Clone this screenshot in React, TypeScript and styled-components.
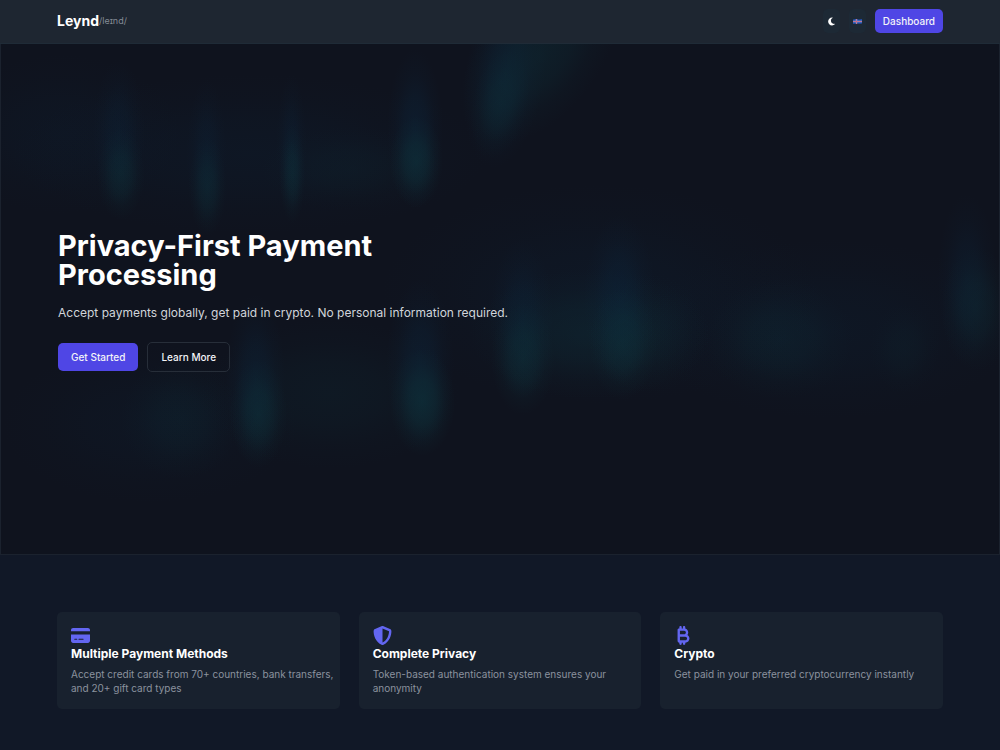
import React from "react";
import styled, { createGlobalStyle } from "styled-components";
import { FaMoon, FaCreditCard, FaShieldHalved, FaBitcoinSign } from "react-icons/fa6";

const GlobalStyle = createGlobalStyle`
  *, *::before, *::after { box-sizing: border-box; }
  body {
    margin: 0;
    background: #111827;
    color: #ffffff;
    font-family: Inter, "Liberation Sans", sans-serif;
  }
  h1, h2, p { margin: 0; }
`;

const Page = styled.div`
  min-height: 100vh;
  display: flex;
  flex-direction: column;
`;

const Header = styled.header`
  display: flex;
  align-items: center;
  justify-content: space-between;
  height: 44px;
  padding: 0 57px 1px;
  background: #1e2631;
  border-bottom: 1px solid #1f2b37;
`;

const Brand = styled.a`
  display: flex;
  align-items: center;
  color: #ffffff;
  font-size: 14px;
  line-height: 20px;
  font-weight: 700;
  text-decoration: none;
`;

const Pronunciation = styled.span`
  color: #848b95;
  font-size: 9px;
  font-weight: 400;
`;

const Actions = styled.nav`
  display: flex;
  align-items: center;
  gap: 9px;
`;

const IconButton = styled.button`
  display: flex;
  align-items: center;
  justify-content: center;
  width: 17px;
  height: 24px;
  padding: 0;
  border: 0;
  border-radius: 5px;
  background: #1d2935;
  color: #ffffff;
  font-size: 9px;
`;

const ButtonLink = styled.a<{ $size: "small" | "large"; $outline?: boolean }>`
  display: flex;
  align-items: center;
  height: ${(p) => (p.$size === "small" ? 24 : p.$outline ? 30 : 28)}px;
  padding: 0 ${(p) => (p.$size === "small" ? 8 : 13)}px;
  border: ${(p) => (p.$outline ? "1px solid #272e39" : "0")};
  border-radius: 5px;
  background: ${(p) => (p.$outline ? "transparent" : "#4f46e5")};
  color: #f3f4f8;
  font-size: 10px;
  line-height: 14px;
  font-weight: 500;
  text-decoration: none;
  white-space: nowrap;
`;

const Hero = styled.section`
  position: relative;
  display: flex;
  align-items: center;
  min-height: 511px;
  padding: 4px 57px 0;
  border: 1px solid #1b222e;
  border-top: 0;
  background: #0f131e;
  overflow: hidden;
`;

const Aurora = styled.svg`
  position: absolute;
  inset: 0;
  width: 100%;
  height: 100%;
`;

const HeroContent = styled.div`
  position: relative;
  display: flex;
  flex-direction: column;
  gap: 14px;
`;

const Title = styled.h1`
  max-width: 400px;
  font-size: 29px;
  line-height: 29px;
  font-weight: 700;
`;

const Lead = styled.p`
  color: #d1d5db;
  font-size: 12px;
  line-height: 20px;
`;

const ButtonRow = styled.div`
  display: flex;
  align-items: center;
  gap: 9px;
  padding-top: 5px;
`;

const Features = styled.section`
  display: grid;
  grid-template-columns: repeat(3, 1fr);
  gap: 19px;
  padding: 57px;
`;

const Card = styled.article`
  padding: 14px 4px 14px 14px;
  border-radius: 5px;
  background: #18212e;
`;

const CardIcon = styled.div`
  display: flex;
  color: #6366f1;
  font-size: 19px;
`;

const CardTitle = styled.h2`
  font-size: 12px;
  line-height: 17px;
  font-weight: 700;
`;

const CardText = styled.p`
  padding-top: 5px;
  color: #8b929e;
  font-size: 10px;
  line-height: 14px;
`;

const Flag = () => (
  <svg width="9" height="7" viewBox="0 0 9 7" aria-hidden="true">
    <path d="M0 1.6Q2.2 .6 4.5 1.2T9 1V5.4Q6.8 6.2 4.5 5.6T0 6Z" fill="#1f4fae" />
    <path d="M0 3.5H9M3.5 1V6" stroke="#8fa6dc" strokeWidth="1.4" />
    <path d="M0 3.5H9M3.5 1V6" stroke="#d8566c" strokeWidth="0.6" />
  </svg>
);

type Glow = [
  x: number,
  y: number,
  rx: number,
  ry: number,
  tone: "blue" | "teal",
  opacity: number,
  rotation?: number,
];

const glows: Glow[] = [
  [60, 90, 120, 80, "blue", 0.15],
  [250, 110, 240, 80, "blue", 0.18],
  [118, 90, 26, 75, "blue", 0.28],
  [120, 130, 24, 46, "teal", 0.45],
  [206, 110, 20, 75, "blue", 0.25],
  [207, 143, 19, 50, "teal", 0.4],
  [291, 100, 15, 70, "blue", 0.25],
  [292, 130, 13, 50, "teal", 0.45],
  [350, 125, 90, 42, "teal", 0.16],
  [415, 85, 28, 80, "blue", 0.42],
  [416, 118, 27, 46, "teal", 0.6],
  [505, 30, 40, 95, "blue", 0.4, 8],
  [500, 60, 28, 55, "teal", 0.35, 12],
  [540, 10, 60, 105, "teal", 0.38, 38],
  [600, 250, 220, 110, "blue", 0.2],
  [180, 375, 60, 60, "teal", 0.24],
  [150, 380, 150, 80, "blue", 0.14],
  [255, 335, 30, 85, "blue", 0.38],
  [258, 370, 29, 54, "teal", 0.52],
  [330, 350, 130, 75, "teal", 0.2],
  [420, 320, 34, 85, "blue", 0.42],
  [422, 358, 33, 54, "teal", 0.65],
  [522, 275, 32, 80, "blue", 0.35],
  [523, 315, 32, 56, "teal", 0.5],
  [590, 290, 120, 65, "teal", 0.35],
  [650, 290, 60, 60, "teal", 0.18],
  [620, 255, 36, 85, "blue", 0.4],
  [623, 300, 34, 56, "teal", 0.45],
  [780, 295, 75, 60, "teal", 0.28],
  [830, 285, 190, 90, "blue", 0.18],
  [905, 305, 35, 45, "teal", 0.15],
  [968, 235, 30, 85, "blue", 0.3],
  [978, 265, 36, 62, "teal", 0.32],
];

const AuroraBackdrop = () => (
  <Aurora viewBox="0 0 1000 510" preserveAspectRatio="none" aria-hidden="true">
    <defs>
      <radialGradient id="blue">
        <stop offset="0" stopColor="#0c2840" />
        <stop offset="0.4" stopColor="#0c2840" stopOpacity="0.7" />
        <stop offset="0.7" stopColor="#0c2840" stopOpacity="0.25" />
        <stop offset="1" stopColor="#0c2840" stopOpacity="0" />
      </radialGradient>
      <radialGradient id="teal">
        <stop offset="0" stopColor="#0e323b" />
        <stop offset="0.4" stopColor="#0e323b" stopOpacity="0.7" />
        <stop offset="0.7" stopColor="#0e323b" stopOpacity="0.25" />
        <stop offset="1" stopColor="#0e323b" stopOpacity="0" />
      </radialGradient>
    </defs>
    {glows.map(([cx, cy, rx, ry, tone, opacity, rotation = 0], i) => (
      <ellipse
        key={i}
        cx={cx}
        cy={cy}
        rx={rx}
        ry={ry}
        fill={`url(#${tone})`}
        opacity={opacity}
        transform={`rotate(${rotation} ${cx} ${cy})`}
      />
    ))}
  </Aurora>
);

const features = [
  {
    icon: <FaCreditCard />,
    title: "Multiple Payment Methods",
    text: "Accept credit cards from 70+ countries, bank transfers, and 20+ gift card types",
  },
  {
    icon: <FaShieldHalved />,
    title: "Complete Privacy",
    text: "Token-based authentication system ensures your anonymity",
  },
  {
    icon: <FaBitcoinSign />,
    title: "Crypto",
    text: "Get paid in your preferred cryptocurrency instantly",
  },
];

export default function App() {
  return (
    <Page>
      <GlobalStyle />
      <Header>
        <Brand href="#">
          Leynd<Pronunciation>/leɪnd/</Pronunciation>
        </Brand>
        <Actions>
          <IconButton type="button" aria-label="Toggle theme">
            <FaMoon />
          </IconButton>
          <IconButton type="button" aria-label="Change language">
            <Flag />
          </IconButton>
          <ButtonLink href="#dashboard" $size="small">Dashboard</ButtonLink>
        </Actions>
      </Header>
      <main>
        <Hero>
          <AuroraBackdrop />
          <HeroContent>
            <Title>Privacy-First Payment Processing</Title>
            <Lead>Accept payments globally, get paid in crypto. No personal information required.</Lead>
            <ButtonRow>
              <ButtonLink href="#start" $size="large">Get Started</ButtonLink>
              <ButtonLink href="#features" $size="large" $outline>Learn More</ButtonLink>
            </ButtonRow>
          </HeroContent>
        </Hero>
        <Features id="features">
          {features.map((f) => (
            <Card key={f.title}>
              <CardIcon>{f.icon}</CardIcon>
              <CardTitle>{f.title}</CardTitle>
              <CardText>{f.text}</CardText>
            </Card>
          ))}
        </Features>
      </main>
    </Page>
  );
}
